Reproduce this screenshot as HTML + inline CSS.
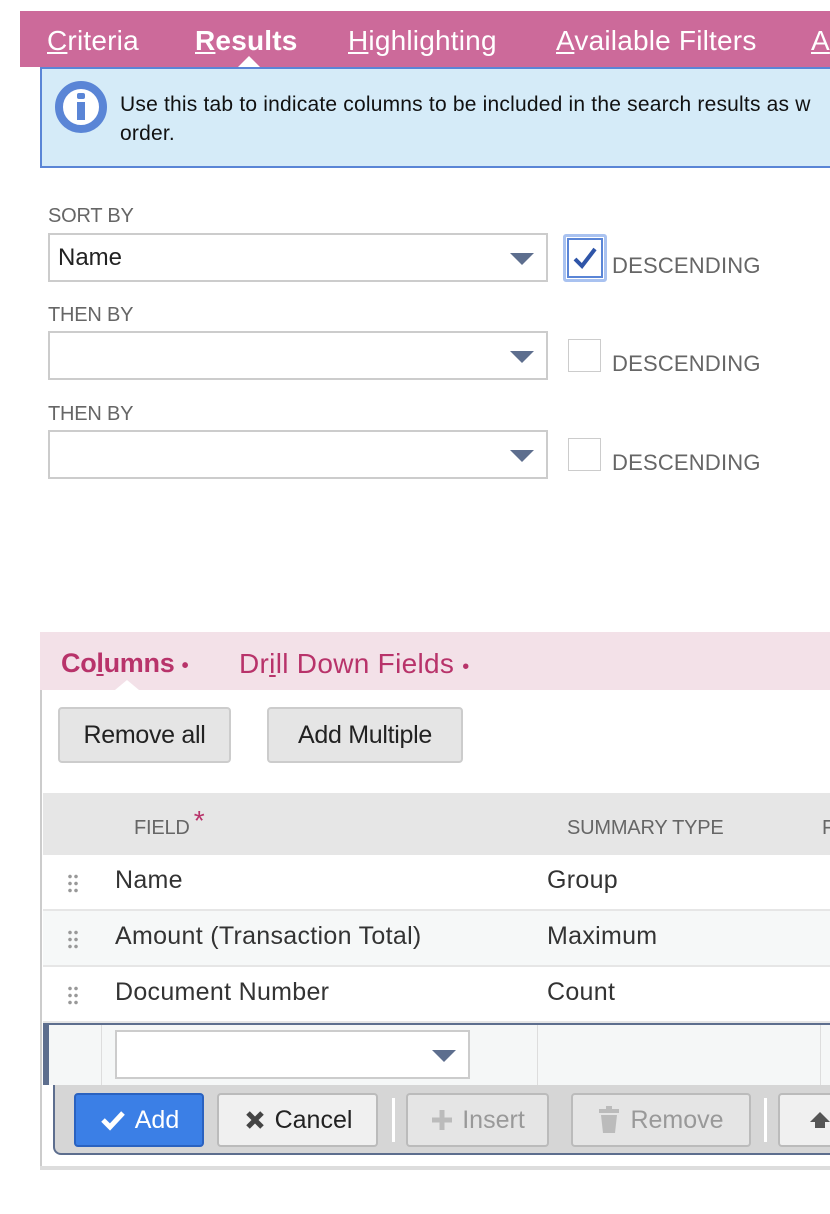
<!DOCTYPE html>
<html><head><meta charset="utf-8"><style>
*{box-sizing:border-box;margin:0;padding:0}
body{width:830px;height:1214px;background:#fff;position:relative;overflow:hidden;font-family:"Liberation Sans",sans-serif;color:#333}
.a{position:absolute;white-space:nowrap}
.nav{left:20px;top:11px;width:810px;height:56px;background:#cc6a9a}
.nav span{position:absolute;top:14px;font-size:28px;color:#fff;letter-spacing:0.2px}
.lbl{font-size:20px;color:#666;letter-spacing:-0.2px}
.sel{border:2px solid #ccc;background:#fff;width:500px;height:49px}
.arr{position:absolute;right:12px;top:18px;width:0;height:0;border-left:12px solid transparent;border-right:12px solid transparent;border-top:12px solid #5d6e8e}
.cb{border:1px solid #ccc;width:33px;height:33px;background:#fff}
.desc{font-size:22px;color:#666;letter-spacing:0.2px}
.btn{border:2px solid #ccc;border-radius:4px;background:#e5e5e5;font-size:25px;color:#222;display:flex;align-items:center;justify-content:center;letter-spacing:-0.3px}
.row{left:43px;width:787px;height:56px;border-bottom:2px solid #e6e6e6}
.row span{position:absolute;top:11px;font-size:25px;color:#333;letter-spacing:0.3px}
.dots{position:absolute;left:24px;top:18px;width:12px;height:20px;background:radial-gradient(circle,#999 1.6px,transparent 2px) 0 0/6px 7px}
.tb{border:2px solid #bbb;border-radius:4px;background:#e5e5e5;font-size:25px;display:flex;align-items:center;justify-content:center;top:1093px;height:54px}
</style></head><body>
<div class="a nav">
<span style="left:27px"><u>C</u>riteria</span>
<span style="left:175px;font-weight:bold"><u>R</u>esults</span>
<span style="left:328px"><u>H</u>ighlighting</span>
<span style="left:536px"><u>A</u>vailable Filters</span>
<span style="left:791px"><u>A</u></span>
</div>
<div class="a" style="left:237px;top:56px;width:0;height:0;border-left:12px solid transparent;border-right:12px solid transparent;border-bottom:12px solid #fff"></div>
<div class="a" style="left:40px;top:67px;width:800px;height:101px;background:#d5ebf8;border:2px solid #5a85d6"></div>
<div class="a" style="left:55px;top:81px;width:52px;height:52px;border-radius:50%;border:8px solid #5a85d6;background:#fff"></div>
<div class="a" style="left:77px;top:93px;width:8px;height:6px;background:#5a85d6;border-radius:2px"></div>
<div class="a" style="left:77px;top:102px;width:8px;height:18px;background:#5a85d6"></div>
<div class="a" style="left:120px;top:90px;font-size:21px;color:#111;letter-spacing:0.2px;line-height:29px">Use this tab to indicate columns to be included in the search results as w<br>order.</div>

<div class="a lbl" style="left:48px;top:205px">SORT BY</div>
<div class="a sel" style="left:48px;top:233px"><span class="a" style="left:8px;top:9px;font-size:24px;color:#222">Name</span><div class="arr"></div></div>
<div class="a" style="left:563px;top:234px;width:44px;height:48px;border:3px solid #a9c2f0;border-radius:3px"></div>
<div class="a cb" style="left:567px;top:238px;height:40px;width:36px;border:2px solid #5a85d6"></div>
<svg class="a" style="left:570px;top:243px" width="30" height="30" viewBox="0 0 30 30"><path d="M5 16 L12 23 L25 6" fill="none" stroke="#2f55a8" stroke-width="4"/></svg>
<div class="a desc" style="left:612px;top:253px">DESCENDING</div>

<div class="a lbl" style="left:48px;top:304px">THEN BY</div>
<div class="a sel" style="left:48px;top:331px"><div class="arr"></div></div>
<div class="a cb" style="left:568px;top:339px"></div>
<div class="a desc" style="left:612px;top:351px">DESCENDING</div>

<div class="a lbl" style="left:48px;top:403px">THEN BY</div>
<div class="a sel" style="left:48px;top:430px"><div class="arr"></div></div>
<div class="a cb" style="left:568px;top:438px"></div>
<div class="a desc" style="left:612px;top:450px">DESCENDING</div>

<div class="a" style="left:40px;top:632px;width:790px;height:58px;background:#f3e1e8"></div>
<div class="a" style="left:61px;top:648px;font-size:27px;color:#b8336a;font-weight:bold;letter-spacing:-0.3px">Co<u>l</u>umns <span style="font-size:20px">•</span></div>
<div class="a" style="left:239px;top:648px;font-size:28px;color:#b8336a;letter-spacing:0.3px">Dr<u>i</u>ll Down Fields <span style="font-size:20px">•</span></div>
<div class="a" style="left:115px;top:680px;width:0;height:0;border-left:12px solid transparent;border-right:12px solid transparent;border-bottom:10px solid #fff"></div>
<div class="a" style="left:40px;top:690px;width:2px;height:480px;background:#ccc"></div>
<div class="a" style="left:40px;top:1166px;width:790px;height:4px;background:#ddd"></div>

<div class="a btn" style="left:58px;top:707px;width:173px;height:56px">Remove all</div>
<div class="a btn" style="left:267px;top:707px;width:196px;height:56px">Add Multiple</div>

<div class="a" style="left:43px;top:793px;width:787px;height:62px;background:#e6e6e6"></div>
<div class="a lbl" style="left:134px;top:817px">FIELD<span style="color:#b8336a;font-size:28px;position:relative;top:-4px;margin-left:4px;line-height:10px">*</span></div>
<div class="a lbl" style="left:567px;top:817px">SUMMARY TYPE</div>
<div class="a lbl" style="left:822px;top:817px">F</div>

<div class="a row" style="top:855px;background:#fff"><div class="dots"></div><span style="left:72px">Name</span><span style="left:504px">Group</span></div>
<div class="a row" style="top:911px;background:#f6f8f8"><div class="dots"></div><span style="left:72px">Amount (Transaction Total)</span><span style="left:504px">Maximum</span></div>
<div class="a row" style="top:967px;background:#fff"><div class="dots"></div><span style="left:72px">Document Number</span><span style="left:504px">Count</span></div>

<div class="a" style="left:43px;top:1023px;width:787px;height:62px;background:#f5f7f7;border-top:2px solid #5d6e8e"></div>
<div class="a" style="left:43px;top:1023px;width:6px;height:62px;background:#5d6e8e"></div>
<div class="a" style="left:101px;top:1025px;width:1px;height:60px;background:#ddd"></div>
<div class="a" style="left:537px;top:1025px;width:1px;height:60px;background:#ddd"></div>
<div class="a" style="left:820px;top:1025px;width:1px;height:60px;background:#ddd"></div>
<div class="a sel" style="left:115px;top:1030px;width:355px;height:49px"><div class="arr"></div></div>

<div class="a" style="left:53px;top:1085px;width:790px;height:70px;background:#d6d6d6;border:2px solid #5d6e8e;border-top:none;border-radius:0 0 0 8px"></div>
<div class="a tb" style="left:74px;width:130px;background:#3b7fe6;border-color:#2a62c0;color:#fff">
<svg width="28" height="24" viewBox="0 0 28 24" style="margin-right:8px"><path d="M4 12 L11 19 L24 5" fill="none" stroke="#fff" stroke-width="5"/></svg>Add</div>
<div class="a tb" style="left:217px;width:161px;background:#f0f0f0;color:#222">
<svg width="24" height="24" viewBox="0 0 24 24" style="margin-right:8px"><path d="M5 5 L19 19 M19 5 L5 19" stroke="#444" stroke-width="5"/></svg>Cancel</div>
<div class="a" style="left:392px;top:1098px;width:3px;height:44px;background:#fff"></div>
<div class="a tb" style="left:406px;width:143px;color:#999">
<svg width="24" height="24" viewBox="0 0 24 24" style="margin-right:8px"><path d="M12 2 V22 M2 12 H22" stroke="#bbb" stroke-width="5"/></svg>Insert</div>
<div class="a tb" style="left:571px;width:180px;color:#999">
<svg width="22" height="28" viewBox="0 0 22 28" style="margin-right:10px"><rect x="1" y="3" width="20" height="4" fill="#bbb"/><rect x="8" y="0" width="6" height="4" fill="#bbb"/><path d="M3 9 H19 L17 27 H5 Z" fill="#bbb"/></svg>Remove</div>
<div class="a" style="left:764px;top:1098px;width:3px;height:44px;background:#fff"></div>
<div class="a tb" style="left:778px;width:80px;background:#f0f0f0;justify-content:flex-start;padding-left:28px">
<svg width="24" height="20" viewBox="0 0 24 20"><path d="M12 2 L22 12 H17 V18 H7 V12 H2 Z" fill="#555"/></svg></div>
</body></html>
